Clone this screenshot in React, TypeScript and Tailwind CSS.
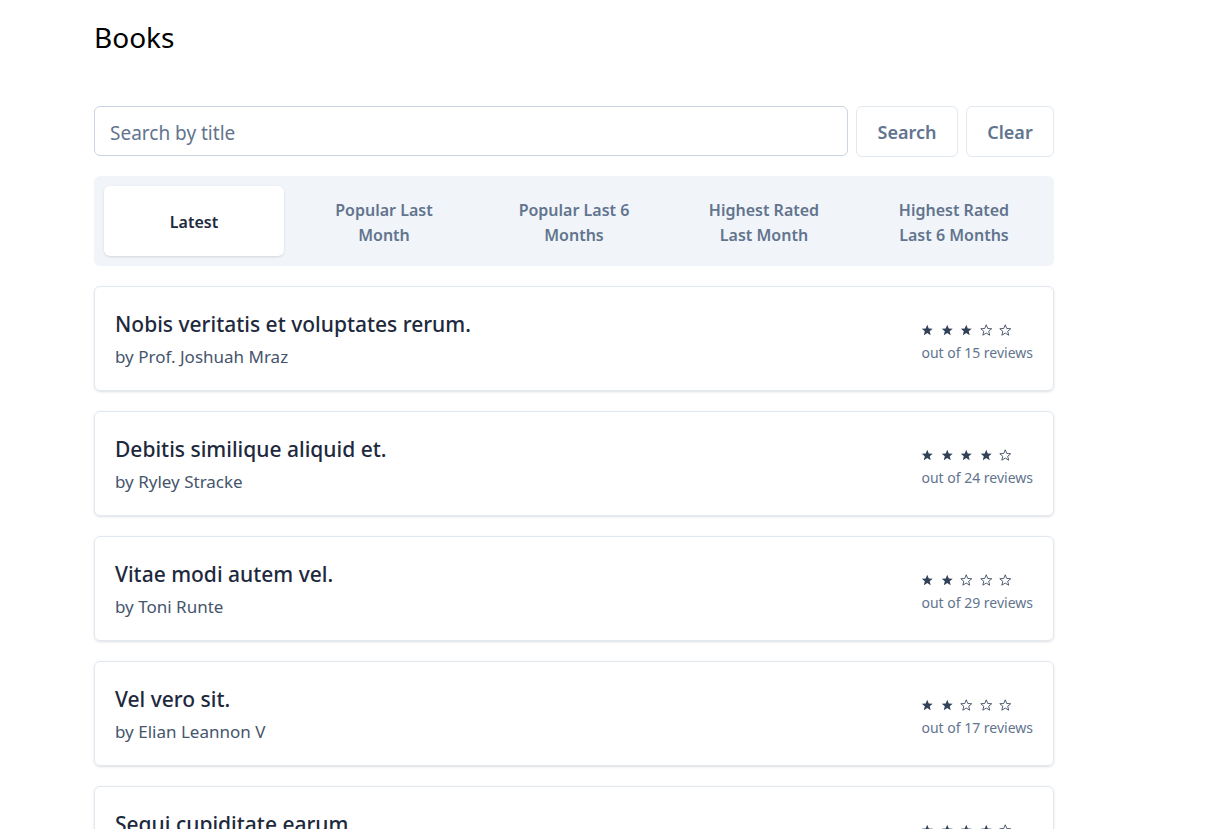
import { useState } from "react";

type Book = { title: string; author: string; rating: number; reviews: number };

const books: Book[] = [
  { title: "Nobis veritatis et voluptates rerum.", author: "Prof. Joshuah Mraz", rating: 3, reviews: 15 },
  { title: "Debitis similique aliquid et.", author: "Ryley Stracke", rating: 4, reviews: 24 },
  { title: "Vitae modi autem vel.", author: "Toni Runte", rating: 2, reviews: 29 },
  { title: "Vel vero sit.", author: "Elian Leannon V", rating: 2, reviews: 17 },
  { title: "Sequi cupiditate earum.", author: "Maye Kuhic", rating: 4, reviews: 21 },
];

const tabs = [
  "Latest",
  "Popular Last Month",
  "Popular Last 6 Months",
  "Highest Rated Last Month",
  "Highest Rated Last 6 Months",
];

const STAR = "12,1.5 14.9,8.6 22.5,9.1 16.7,14 18.6,21.5 12,17.4 5.4,21.5 7.3,14 1.5,9.1 9.1,8.6";

const Stars = ({ rating }: { rating: number }) => (
  <div className="flex h-5 items-center gap-[7px] text-slate-700">
    {[1, 2, 3, 4, 5].map((i) => (
      <svg key={i} viewBox="0 0 24 24" className="h-[12.5px] w-[12.5px]">
        {i <= rating ? (
          <polygon points={STAR} fill="currentColor" />
        ) : (
          <polygon points={STAR} fill="none" stroke="currentColor" strokeWidth="1.6" strokeLinejoin="round" />
        )}
      </svg>
    ))}
  </div>
);

const App = () => {
  const [active, setActive] = useState(0);

  return (
    <div className="min-h-screen bg-white font-['Noto_Sans',sans-serif]">
      <div className="ml-[94px] w-[960px] pt-[19px]">
        {/* Title */}
        <h1 className="text-[28px] leading-9 text-black">Books</h1>

        {/* Search */}
        <div className="mt-[51px] flex gap-2">
          <input
            type="text"
            placeholder="Search by title"
            className="h-[50px] flex-1 rounded-md border border-slate-300 px-[15px] pt-[3px] text-[19px] text-slate-700 placeholder:text-slate-500"
          />
          <button className="h-[51px] w-[102px] rounded-md border border-slate-200 text-lg font-semibold text-slate-500">
            Search
          </button>
          <button className="h-[51px] w-[88px] rounded-md border border-slate-200 text-lg font-semibold text-slate-500">
            Clear
          </button>
        </div>

        {/* Tabs */}
        <div className="mt-[19px] flex gap-2.5 rounded-md bg-slate-100 p-2.5">
          {tabs.map((t, i) => (
            <button
              key={t}
              onClick={() => setActive(i)}
              className={
                i === active
                  ? "flex h-[70px] flex-1 items-center justify-center rounded-md bg-white px-6 pt-[3px] text-center text-base font-semibold leading-[25px] text-slate-800 shadow-sm"
                  : "flex h-[70px] flex-1 items-center justify-center rounded-md px-6 pt-1 text-center text-base font-semibold leading-[25px] text-slate-500"
              }
            >
              {t}
            </button>
          ))}
        </div>

        {/* Book list */}
        <ul className="mt-5 flex flex-col gap-5">
          {books.map((b) => (
            <li
              key={b.title}
              className="flex h-[105px] items-center justify-between rounded-md border border-slate-200 px-5 shadow-sm"
            >
              <div className="pt-[2px]">
                <h2 className="text-[21px] font-medium leading-7 text-slate-800">{b.title}</h2>
                <p className="mt-1.5 text-[17px] leading-[25px] text-slate-600">by {b.author}</p>
              </div>
              <div className="pt-[6px]">
                <Stars rating={b.rating} />
                <p className="mt-0.5 text-sm text-slate-500">out of {b.reviews} reviews</p>
              </div>
            </li>
          ))}
        </ul>
      </div>
    </div>
  );
};

export default App;
